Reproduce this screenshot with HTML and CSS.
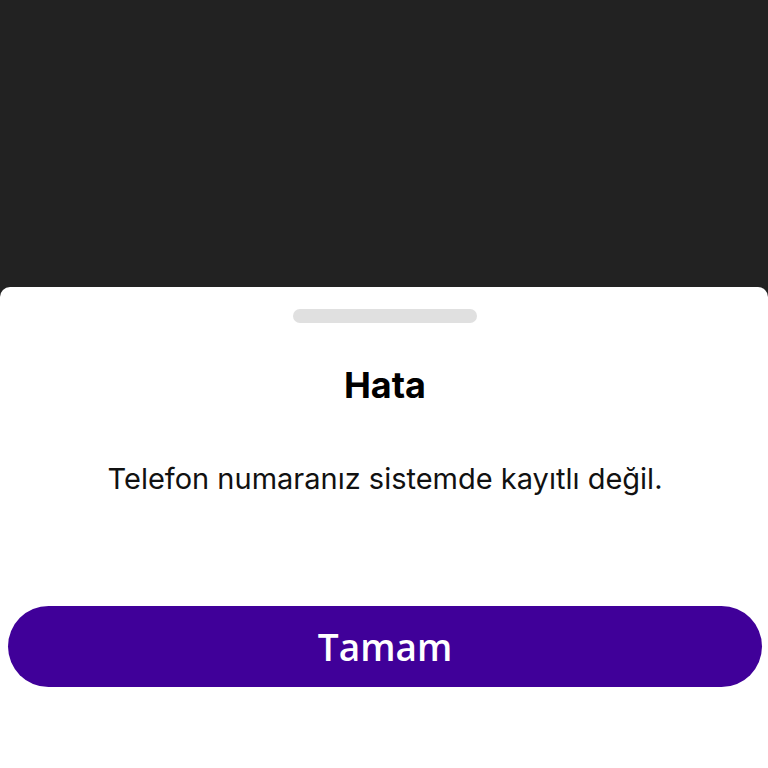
FILE: index.html
```html
<!DOCTYPE html>
<html lang="tr">
  <head>
    <meta charset="UTF-8" />
    <title>Hata</title>
    <link rel="stylesheet" href="styles.css">
  </head>
  <body>
    <div class="backdrop"></div>
    <div class="sheet">
      <div class="handle"></div>
      <h2 class="title">Hata</h2>
      <p class="message">Telefon numaranız sistemde kayıtlı değil.</p>
      <button class="ok-button">Tamam</button>
    </div>
  </body>
</html>
```
FILE: styles.css
```css
html,
body {
  margin: 0;
  height: 100%;
}

body {
  font-family: Inter, "Noto Sans", sans-serif;
  background: #222222;
  display: flex;
  flex-direction: column;
}

.backdrop {
  height: 287px;
  flex-shrink: 0;
}

.sheet {
  flex: 1;
  background: #fff;
  border-radius: 10px 10px 0 0;
  padding: 22px 6px 0 8px;
  display: flex;
  flex-direction: column;
  align-items: center;
}

.handle {
  width: 184px;
  height: 14px;
  border-radius: 7px;
  background: #e0e0e0;
}

.title {
  margin: 40px 0 0;
  font-size: 36px;
  font-weight: 700;
  line-height: 44px;
  color: #000;
}

.message {
  margin: 54px 0 0;
  font-size: 29px;
  line-height: 36px;
  color: #111;
}

.ok-button {
  margin-top: 109px;
  width: 100%;
  height: 81px;
  border: none;
  border-radius: 41px;
  background: #400099;
  color: #fff;
  font-family: "Open Sans", sans-serif;
  font-size: 37px;
  font-weight: 600;
}
```
